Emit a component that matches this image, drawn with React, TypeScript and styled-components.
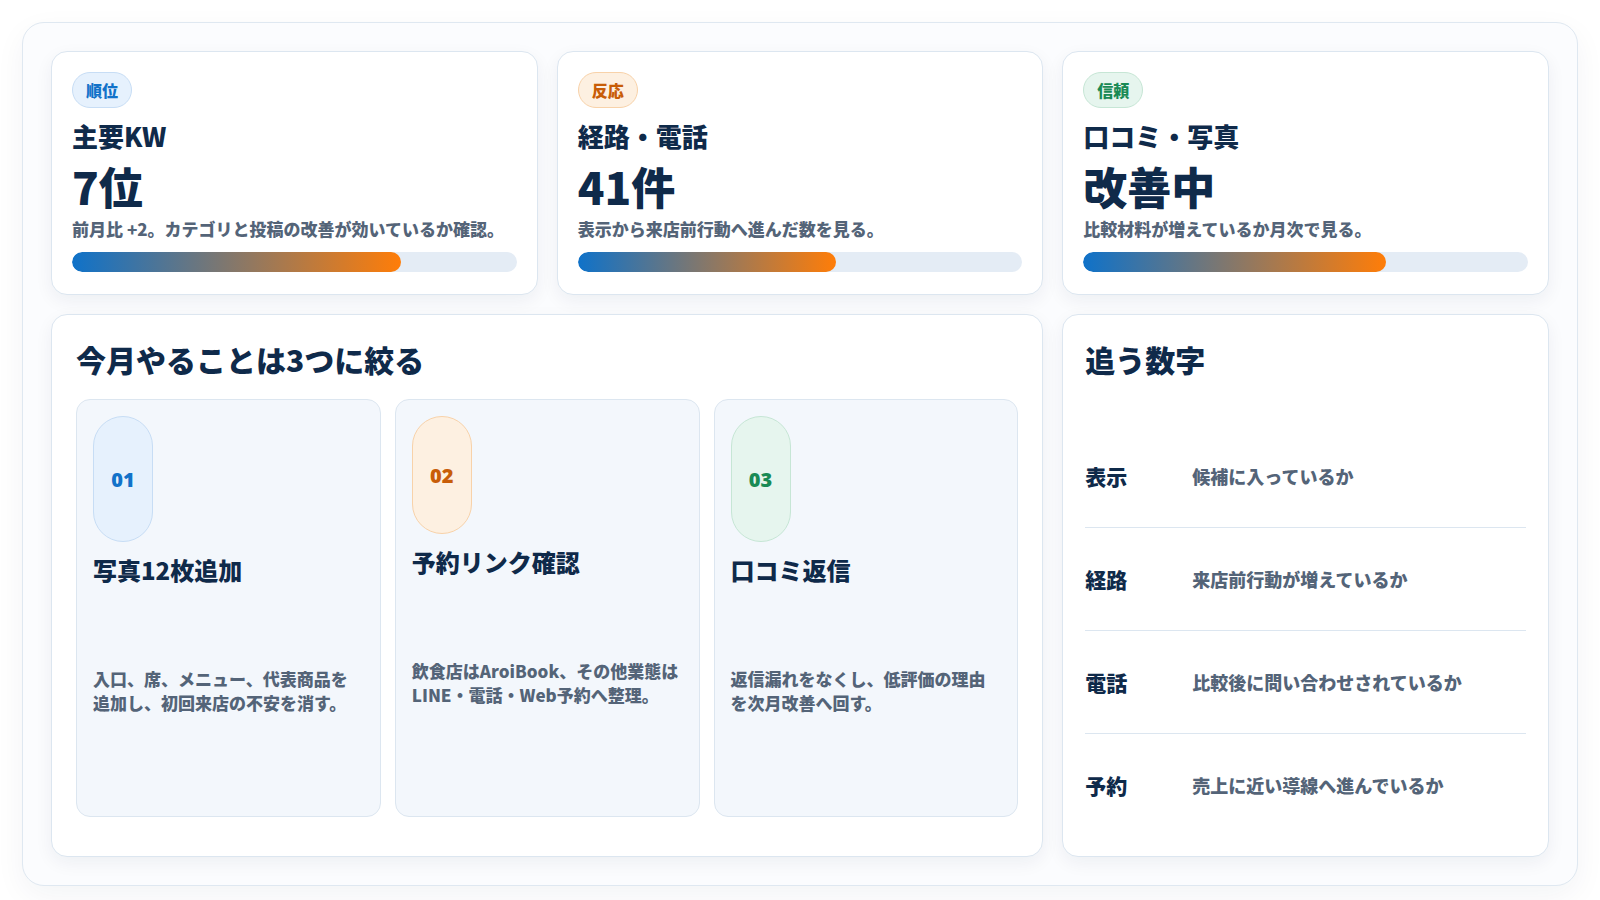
import React from "react";
import styled, { createGlobalStyle } from "styled-components";

const GlobalStyle = createGlobalStyle`
  body {
    margin: 0;
    background: #ffffff;
    font-family: "Noto Sans CJK JP", "Noto Sans", sans-serif;
    color: #0f2a4a;
  }
`;

type Tone = "blue" | "orange" | "green";

const tones: Record<Tone, { bg: string; border: string; fg: string }> = {
  blue: { bg: "#e6f1fd", border: "#c7ddf5", fg: "#1272c9" },
  orange: { bg: "#fdf0e1", border: "#f8d2a9", fg: "#c85d08" },
  green: { bg: "#e6f5ee", border: "#c6e6d5", fg: "#198a55" },
};

const Shell = styled.div`
  margin: 22px 22px 40px 22px;
  padding: 28px;
  border: 1px solid #dfe8f1;
  border-radius: 22px;
  background: #fbfcfe;
  box-shadow: 0 10px 30px rgba(15, 42, 74, 0.05);
  display: grid;
  grid-template-columns: 1fr 1fr 1fr;
  gap: 19px;
`;

const Card = styled.section<{ $span?: number }>`
  grid-column: span ${(p) => p.$span ?? 1};
  background: #ffffff;
  border: 1px solid #dce6f0;
  border-radius: 16px;
  box-shadow: 0 6px 18px rgba(15, 42, 74, 0.06);
  padding: 20px 20px 22px;
`;

const MetricCard = styled(Card)`
  display: flex;
  flex-direction: column;
  height: 244px;
  box-sizing: border-box;
  padding-bottom: 4px;
`;

const Badge = styled.span<{ $tone: Tone }>`
  align-self: flex-start;
  padding: 5px 13px;
  border-radius: 999px;
  font-size: 16px;
  font-weight: 900;
  line-height: 24px;
  background: ${(p) => tones[p.$tone].bg};
  border: 1px solid ${(p) => tones[p.$tone].border};
  color: ${(p) => tones[p.$tone].fg};
`;

const Label = styled.div`
  margin-top: 10px;
  font-size: 26px;
  font-weight: 900;
  line-height: 36px;
`;

const Value = styled.div`
  margin-top: 6px;
  font-size: 44px;
  font-weight: 900;
  line-height: 52px;
`;

const Note = styled.p`
  margin: 4px 0 0;
  font-size: 17px;
  font-weight: 900;
  line-height: 1.5;
  color: #546478;
`;

const Track = styled.div`
  margin-top: auto;
  margin-bottom: 18px;
  height: 20px;
  border-radius: 10px;
  background: #e4ecf5;
  overflow: hidden;
`;

const Fill = styled.div`
  height: 100%;
  border-radius: 10px;
  background: linear-gradient(90deg, #0f72c9, #ff7d08);
`;

const Heading = styled.h2`
  margin: 2px 4px 18px;
  font-size: 30px;
  font-weight: 900;
`;

const Steps = styled.div`
  display: grid;
  grid-template-columns: repeat(3, 1fr);
  gap: 14px;
  padding: 0 4px;
`;

const Step = styled.div`
  height: 418px;
  box-sizing: border-box;
  border: 1px solid #dce6f0;
  border-radius: 14px;
  background: #f3f7fc;
  padding: 16px;
  display: flex;
  flex-direction: column;
`;

const Pill = styled.div<{ $tone: Tone; $h: number }>`
  width: 58px;
  height: ${(p) => p.$h}px;
  border-radius: 30px;
  display: flex;
  align-items: center;
  justify-content: center;
  font-family: "Noto Sans", sans-serif;
  font-size: 20px;
  font-weight: 900;
  background: ${(p) => tones[p.$tone].bg};
  border: 1px solid ${(p) => tones[p.$tone].border};
  color: ${(p) => tones[p.$tone].fg};
`;

const StepTitle = styled.div`
  margin-top: 10px;
  font-size: 24px;
  font-weight: 900;
`;

const StepText = styled.p`
  margin: 80px 0 0;
  font-size: 17px;
  font-weight: 900;
  line-height: 1.4;
  color: #546478;
`;

const SideCard = styled(Card)`
  display: flex;
  flex-direction: column;
  padding: 20px 22px;
`;

const Rows = styled.div`
  margin-top: 44px;
  display: flex;
  flex-direction: column;
`;

const Row = styled.div<{ $last?: boolean }>`
  height: 102px;
  display: flex;
  align-items: center;
  border-bottom: ${(p) => (p.$last ? "none" : "1px solid #dce6f0")};
`;

const RowKey = styled.span`
  width: 107px;
  font-size: 21px;
  font-weight: 900;
`;

const RowVal = styled.span`
  font-size: 18px;
  font-weight: 900;
  color: #546478;
`;

const metrics = [
  { tone: "blue" as Tone, badge: "順位", label: "主要KW", value: "7位", note: "前月比 +2。カテゴリと投稿の改善が効いているか確認。", pct: 74 },
  { tone: "orange" as Tone, badge: "反応", label: "経路・電話", value: "41件", note: "表示から来店前行動へ進んだ数を見る。", pct: 58 },
  { tone: "green" as Tone, badge: "信頼", label: "口コミ・写真", value: "改善中", note: "比較材料が増えているか月次で見る。", pct: 68 },
];

const steps = [
  { tone: "blue" as Tone, no: "01", h: 124, title: "写真12枚追加", text: "入口、席、メニュー、代表商品を追加し、初回来店の不安を消す。" },
  { tone: "orange" as Tone, no: "02", h: 116, title: "予約リンク確認", text: "飲食店はAroiBook、その他業態はLINE・電話・Web予約へ整理。" },
  { tone: "green" as Tone, no: "03", h: 124, title: "口コミ返信", text: "返信漏れをなくし、低評価の理由を次月改善へ回す。" },
];

const rows = [
  ["表示", "候補に入っているか"],
  ["経路", "来店前行動が増えているか"],
  ["電話", "比較後に問い合わせされているか"],
  ["予約", "売上に近い導線へ進んでいるか"],
];

export default function App() {
  return (
    <>
      <GlobalStyle />
      <Shell>
        {metrics.map((m) => (
          <MetricCard key={m.badge}>
            <Badge $tone={m.tone}>{m.badge}</Badge>
            <Label>{m.label}</Label>
            <Value>{m.value}</Value>
            <Note>{m.note}</Note>
            <Track>
              <Fill style={{ width: `${m.pct}%` }} />
            </Track>
          </MetricCard>
        ))}
        <Card $span={2}>
          <Heading>今月やることは3つに絞る</Heading>
          <Steps>
            {steps.map((s) => (
              <Step key={s.no}>
                <Pill $tone={s.tone} $h={s.h}>{s.no}</Pill>
                <StepTitle>{s.title}</StepTitle>
                <StepText>{s.text}</StepText>
              </Step>
            ))}
          </Steps>
        </Card>
        <SideCard>
          <Heading style={{ margin: "2px 0 0" }}>追う数字</Heading>
          <Rows>
            {rows.map(([k, v], i) => (
              <Row key={k} $last={i === rows.length - 1}>
                <RowKey>{k}</RowKey>
                <RowVal>{v}</RowVal>
              </Row>
            ))}
          </Rows>
        </SideCard>
      </Shell>
    </>
  );
}
